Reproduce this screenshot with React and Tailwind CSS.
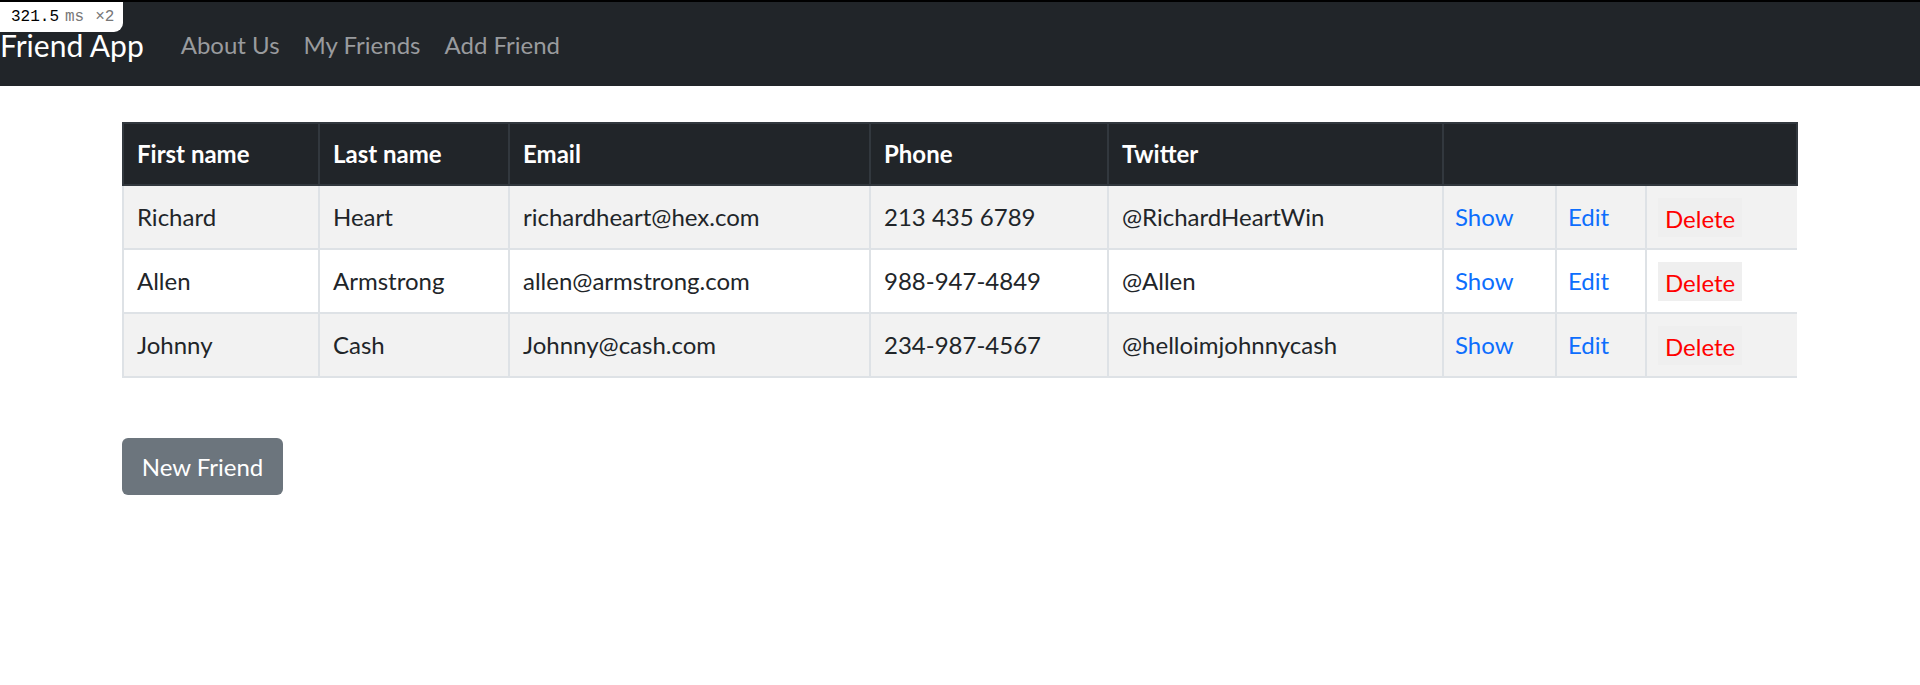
import React from "react";

const friends = [
  { first: "Richard", last: "Heart", email: "richardheart@hex.com", phone: "213 435 6789", twitter: "@RichardHeartWin" },
  { first: "Allen", last: "Armstrong", email: "allen@armstrong.com", phone: "988-947-4849", twitter: "@Allen" },
  { first: "Johnny", last: "Cash", email: "Johnny@cash.com", phone: "234-987-4567", twitter: "@helloimjohnnycash" },
];

const App = () => {
  return (
    <div className="relative min-h-[685px] bg-white text-[#212529] font-['Lato','Noto_Sans',sans-serif]">
      {/* timing badge */}
      <div className="absolute top-[2px] left-0 z-10 h-[30px] w-[123px] bg-white rounded-br-[9px] flex items-center pl-[11px] font-['Liberation_Mono',monospace] text-[16px] leading-none">
        <span className="text-black">321.5</span>
        <span className="ml-[6px] text-[#777]">ms</span>
        <span className="ml-[11px] text-[#777]">×2</span>
      </div>

      {/* Navbar */}
      <nav className="h-[86px] bg-[#212529] border-t-2 border-black flex items-center pt-[2px]">
        <span className="text-white text-[30px] leading-none">Friend App</span>
        <div className="flex items-center gap-[24px] ml-[37px] text-[24px] text-[#999b9e] leading-none">
          <a>About Us</a>
          <a>My Friends</a>
          <a>Add Friend</a>
        </div>
      </nav>

      <main className="ml-[122px] pt-[36px]">
        <table className="w-[1674px] table-fixed border-collapse text-[24px] leading-none">
          <colgroup>
            <col className="w-[196px]" />
            <col className="w-[190px]" />
            <col className="w-[361px]" />
            <col className="w-[238px]" />
            <col className="w-[335px]" />
            <col className="w-[113px]" />
            <col className="w-[90px]" />
            <col className="w-[151px]" />
          </colgroup>
          <thead>
            <tr className="bg-[#212529] text-white font-bold h-[62px]">
              <th className="text-left px-[13px] border-2 border-[#32383e]">First name</th>
              <th className="text-left px-[13px] border-2 border-[#32383e]">Last name</th>
              <th className="text-left px-[13px] border-2 border-[#32383e]">Email</th>
              <th className="text-left px-[13px] border-2 border-[#32383e]">Phone</th>
              <th className="text-left px-[13px] border-2 border-[#32383e]">Twitter</th>
              <th colSpan={3} className="border-2 border-[#32383e]"></th>
            </tr>
          </thead>
          <tbody>
            {friends.map((f, i) => (
              <tr key={i} className={`h-[64px] ${i % 2 === 0 ? "bg-[#f2f2f2]" : "bg-white"}`}>
                <td className="px-[13px] border-l-2 border-b-2 border-[#dee2e6]">{f.first}</td>
                <td className="px-[13px] border-l-2 border-b-2 border-[#dee2e6]">{f.last}</td>
                <td className="px-[13px] border-l-2 border-b-2 border-[#dee2e6]">{f.email}</td>
                <td className="px-[13px] border-l-2 border-b-2 border-[#dee2e6]">{f.phone}</td>
                <td className="px-[13px] border-l-2 border-b-2 border-[#dee2e6]">{f.twitter}</td>
                <td className="px-[11px] border-l-2 border-b-2 border-[#dee2e6] text-[#0d6efd]">Show</td>
                <td className="px-[11px] border-l-2 border-b-2 border-[#dee2e6] text-[#0d6efd]">Edit</td>
                <td className="px-[11px] border-l-2 border-b-2 border-[#dee2e6]">
                  <button className="h-[39px] px-[7px] pt-[4px] bg-[#efefef] text-[#ff0000] leading-none">Delete</button>
                </td>
              </tr>
            ))}
          </tbody>
        </table>

        <button className="mt-[60px] h-[57px] w-[161px] rounded-[6px] bg-[#6c757d] text-white text-[24px] leading-none">
          New Friend
        </button>
      </main>
    </div>
  );
};

export default App;
